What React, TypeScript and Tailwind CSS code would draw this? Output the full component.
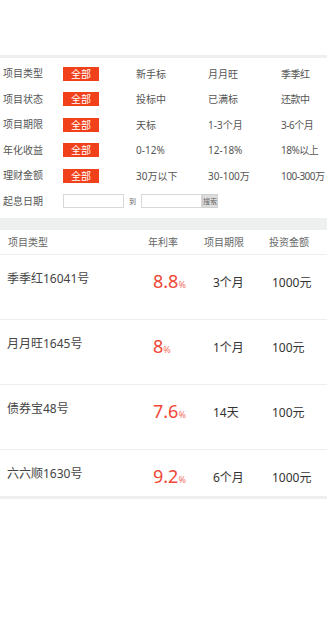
import React from "react";

const filters: { label: string; opts: string[] }[] = [
  { label: "项目类型", opts: ["新手标", "月月旺", "季季红"] },
  { label: "项目状态", opts: ["投标中", "已满标", "还款中"] },
  { label: "项目期限", opts: ["天标", "1-3个月", "3-6个月"] },
  { label: "年化收益", opts: ["0-12%", "12-18%", "18%以上"] },
  { label: "理财金额", opts: ["30万以下", "30-100万", "100-300万"] },
];

const rows = [
  { name: "季季红16041号", rate: "8.8", term: "3个月", amt: "1000元", h: "h-[65px]" },
  { name: "月月旺1645号", rate: "8", term: "1个月", amt: "100元", h: "h-[65px]" },
  { name: "债券宝48号", rate: "7.6", term: "14天", amt: "100元", h: "h-[65px]" },
  { name: "六六顺1630号", rate: "9.2", term: "6个月", amt: "1000元", h: "h-[46px]" },
];

export default function App() {
  return (
    <div
      className="w-[327px] h-[624px] bg-white overflow-hidden"
      style={{ fontFamily: '"Noto Sans", "Noto Sans CJK SC", sans-serif' }}
    >
      <div className="h-[55px]" />
      <div className="h-[3px] bg-[#efefef]" />
      <div className="pt-[3px]">
        {filters.map((f) => (
          <div key={f.label} className="h-[25.5px] flex items-center text-[10px] text-[#555]">
            <div className="w-[63px] shrink-0 pl-[3px]">{f.label}</div>
            <div className="w-[73px] shrink-0">
              <div className="w-[36px] h-[14px] bg-[#f1411b] text-white flex items-center justify-center leading-none">
                全部
              </div>
            </div>
            <div className="grid grid-cols-[72px_73px_46px] shrink-0">
              <div className="leading-none whitespace-nowrap">{f.opts[0]}</div>
              <div className="leading-none whitespace-nowrap">{f.opts[1]}</div>
              <div className="leading-none whitespace-nowrap tracking-[-0.5px]">{f.opts[2]}</div>
            </div>
          </div>
        ))}
        <div className="h-[25.5px] flex items-center text-[10px] text-[#555]">
          <div className="w-[63px] shrink-0 pl-[3px]">起息日期</div>
          <div className="w-[61px] shrink-0 h-[14px] border border-[#d8d8d8] bg-white" />
          <div className="w-[17px] shrink-0 pl-[5px] text-[7px] text-[#666] leading-none">到</div>
          <div className="w-[61px] shrink-0 h-[14px] border border-[#d8d8d8] bg-white" />
          <div className="w-[16px] shrink-0 h-[14px] bg-[#dedede] border border-[#cfcfcf] text-[7px] text-[#666] flex items-center justify-center leading-none">
            搜索
          </div>
        </div>
      </div>
      <div className="h-[4px]" />
      <div className="h-[12px] bg-[#eef0f0]" />
      <div className="h-[25px] flex items-center text-[10px] text-[#666] border-b border-[#f0f0f0]">
        <div className="w-[148px] shrink-0 pl-[8px]">项目类型</div>
        <div className="w-[56px] shrink-0">年利率</div>
        <div className="w-[65px] shrink-0">项目期限</div>
        <div>投资金额</div>
      </div>
      {rows.map((r, i) => (
        <div
          key={r.name}
          className={`${r.h} flex items-start ${i < 3 ? "border-b border-[#eeeeee]" : ""}`}
        >
          <div className="w-[153px] shrink-0 pl-[7px] pt-[16px] text-[12px] leading-[16px] text-[#444]">
            {r.name}
          </div>
          <div className="w-[60px] shrink-0 pt-[15px] flex items-baseline leading-[22px]">
            <span className="text-[18px] text-[#f04634]">{r.rate}</span>
            <span className="text-[9px] text-[#f2705f]">%</span>
          </div>
          <div className="w-[59px] shrink-0 pt-[20px] text-[12px] leading-[16px] text-[#333]">{r.term}</div>
          <div className="pt-[20px] text-[12px] leading-[16px] text-[#333]">{r.amt}</div>
        </div>
      ))}
      <div className="h-[3px] bg-[#efefef]" />
    </div>
  );
}
